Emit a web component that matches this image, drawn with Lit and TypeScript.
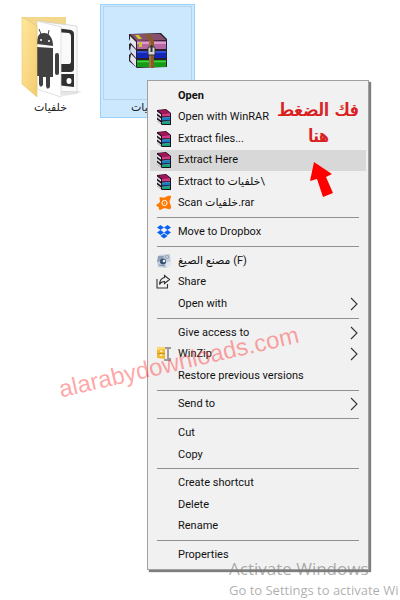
import { LitElement, html, svg, css, nothing } from "lit";
import { customElement, property } from "lit/decorators.js";

type Item = { label: string; icon?: string; bold?: boolean; active?: boolean; sub?: boolean };

const GROUPS: Item[][] = [
  [
    { label: "Open", bold: true },
    { label: "Open with WinRAR", icon: "rar" },
    { label: "Extract files...", icon: "rar" },
    { label: "Extract Here", icon: "rar", active: true },
    { label: "Extract to خلفيات\\", icon: "rar" },
    { label: "Scan خلفيات.rar", icon: "avast" },
  ],
  [{ label: "Move to Dropbox", icon: "dropbox" }],
  [
    { label: "مصنع الصيغ (F)", icon: "factory" },
    { label: "Share", icon: "share" },
    { label: "Open with", sub: true },
  ],
  [
    { label: "Give access to", sub: true },
    { label: "WinZip", icon: "zip", sub: true },
    { label: "Restore previous versions" },
  ],
  [{ label: "Send to", sub: true }],
  [{ label: "Cut" }, { label: "Copy" }],
  [{ label: "Create shortcut" }, { label: "Delete" }, { label: "Rename" }],
  [{ label: "Properties" }],
];

const ICONS: Record<string, unknown> = {
  rar: svg`
    <path d="M1 1 10 0 15 4V16H6L1 12Z" fill="#1d1220"/>
    <path d="M2 1.500 9.500.500 14 4 6 5Z" fill="#a01458"/><path d="M6 5 14 4V7L6 7.500Z" fill="#d23a86"/>
    <path d="M1 2.500 5 5.500V7.500L1 4.500Z" fill="#eee"/>
    <path d="M6 9 14 8V11L6 11.500Z" fill="#1a78c8"/><path d="M1 6.500 5 9.500V11.500L1 8.500Z" fill="#ddd"/>
    <path d="M6 13 14 12V15H6Z" fill="#17a673"/><path d="M1 10.500 5 13.500V15L1 12Z" fill="#eee"/>
    <path d="M6 9 14 8M6 13 14 12" stroke="#5cc0e0" stroke-width=".6"/>`,
  avast: svg`
    <path d="M3.500 2.500C5 1.500 7 3 9 2.500C11 1 13 .5 15 1C15 3 14 5 13.500 6C13.500 8 14.500 9 15 11C15.500 13.500 14 15 12 14C9.500 12.500 7 13 4.500 15C2.500 15 2.500 13.500 3 12C2 11.500 0 11.500.5 10C1 8.500 3.500 8.500 4 6.500Z" fill="#ff7800"/>
    <circle cx="8.500" cy="8" r="2.600" fill="none" stroke="#fff" stroke-width="1"/>
    <circle cx="8.500" cy="8" r=".6" fill="#fff"/>`,
  dropbox: svg`<path d="M4.500 1 8 3.500 4.500 6 1 3.500ZM11.500 1 15 3.500 11.500 6 8 3.500ZM4.500 6 8 8.500 4.500 11 1 8.500ZM11.500 6 15 8.500 11.500 11 8 8.500ZM8 9.500 11.500 12 8 14.500 4.500 12Z" fill="#0a62f5"/>`,
  factory: svg`
    <path d="M3 2 14 1 15 12 10 15 2 14 1 9Z" fill="#c5cfda"/>
    <path d="M2 3 8 3 6 8 1 9Z" fill="#8da0b8"/>
    <circle cx="7" cy="8.500" r="3" fill="#34506f"/><circle cx="8" cy="8" r="1.300" fill="#e8f2ff"/>
    <circle cx="11" cy="4" r="2" fill="#91a4bb"/><circle cx="11" cy="4" r=".8" fill="#fff"/>
    <path d="M10 10 15 8V13L10 14Z" fill="#e2e8ef"/><path d="M3 12 9 13" stroke="#7590b0"/>`,
  share: svg`<path d="M1 5V14H11.500V10M8.500 1.500 13.500 5.500 8.500 9.500V7.500C6 7.500 4.500 8.500 3.500 10.500C3.800 6.500 5.500 4 8.500 3.500Z" fill="none" stroke="#333" stroke-width="1.100"/>`,
  zip: svg`
    <path d="M8 1H15V3H13V12H15V15H8V13H11V3H8Z" fill="#9a9c9e"/>
    <path d="M1 1.500 9 1V13L1 12Z" fill="#f3bb35"/><path d="M1 1.500 9 1V3L1 4Z" fill="#ffdc6b"/>
    <path d="M4 4.500H6.500V6H4ZM4 8.500H6.500V10H4Z" fill="#fff3c4"/><path d="M1 7.500H9" stroke="#c99420"/>`,
};

@customElement("context-menu")
export class ContextMenu extends LitElement {
  @property({ attribute: false }) groups: Item[][] = [];

  static styles = css`
    :host { display: block; }
    .menu {
      box-sizing: border-box;
      display: flex;
      flex-direction: column;
      min-height: 490px;
      padding: 4px 2px 3px;
      background: #f1f1f1;
      border: 1px solid #a0a0a0;
      box-shadow: 2px 2px 1px 0 rgba(0, 0, 0, 0.5);
    }
    .item {
      flex: 3 1 0;
      display: grid;
      grid-template-columns: 16px 1fr 8px;
      align-items: center;
      column-gap: 6px;
      padding: 0 8px 0 6px;
      border: 0;
      background: none;
      color: #111;
      font: 11px/16px Roboto, "DejaVu Sans", sans-serif;
      text-align: left;
      white-space: nowrap;
    }
    .item.active { background: #d8d8d8; }
    .item.bold { font-weight: 700; }
    .item svg { display: block; }
    .label { grid-column: 2; }
    .icon, .chev { grid-row: 1; }
    .icon { grid-column: 1; }
    .chev { grid-column: 3; }
    .sep {
      flex: 1 1 0;
      display: flex;
      align-items: center;
      margin: 0 7px;
    }
    .sep::before { content: ""; flex: 1; height: 1px; background: #919191; }
  `;

  private row(i: Item) {
    return html`<button role="menuitem" class="item ${i.bold ? "bold" : ""} ${i.active ? "active" : ""}">
      ${i.icon ? html`<svg class="icon" width="16" height="16" viewBox="0 0 16 16" aria-hidden="true">${ICONS[i.icon]}</svg>` : nothing}
      <span class="label">${i.label}</span>
      ${i.sub ? html`<svg class="chev" width="8" height="14" viewBox="0 0 8 14" aria-hidden="true"><path d="M1 1 7 7 1 13" fill="none" stroke="#333" stroke-width="1.100"/></svg>` : nothing}
    </button>`;
  }

  render() {
    return html`<div class="menu" role="menu">
      ${this.groups.map((g, n) => html`${n ? html`<div class="sep" role="separator"></div>` : nothing}${g.map((i) => this.row(i))}`)}
    </div>`;
  }
}

@customElement("app-root")
export class AppRoot extends LitElement {
  static styles = css`
    :host {
      display: block;
      position: relative;
      min-height: 100vh;
      overflow: hidden;
      background: #fff;
    }
    .files { display: flex; gap: 2px; padding: 4px 3px 0; }
    .file {
      box-sizing: border-box;
      width: 95px;
      height: 114px;
      display: flex;
      flex-direction: column;
      align-items: center;
      padding: 1px 2px;
      border: 1px solid transparent;
      color: #222;
      font: 11px/16px "DejaVu Sans", sans-serif;
    }
    .file.selected { background: #cce8ff; border-color: #99d1ff; }
    .thumb {
      box-sizing: border-box;
      flex: none;
      align-self: stretch;
      height: 94px;
      display: grid;
      place-items: end center;
      border: 1px solid transparent;
    }
    .selected .thumb { padding-bottom: 4px; border-color: #b5d3ea; align-items: center; }
    .menu { position: absolute; left: 147px; top: 80px; width: 222px; }
    .note {
      position: absolute;
      left: 278px;
      top: 97px;
      width: 80px;
      margin: 0;
      color: #d9201f;
      font: 18px/26px "DejaVu Sans", sans-serif;
      text-shadow: 1px 0 #d9201f;
      text-align: center;
      white-space: nowrap;
    }
    .arrow { position: absolute; left: 309px; top: 161px; }
    .site {
      position: absolute;
      left: 56px;
      top: 348px;
      color: rgba(255, 40, 40, 0.42);
      font: 24px/28px "Liberation Sans", sans-serif;
      transform: rotate(-13deg);
    }
    .activate {
      position: absolute;
      left: 229px;
      top: 558px;
      color: rgba(120, 120, 120, 0.6);
      font: 13px/20px "Open Sans", sans-serif;
      white-space: nowrap;
    }
    .activate p { margin: 0; }
    .activate .big { font-size: 17px; line-height: 22px; }
  `;

  render() {
    return html`
      <main class="files">
        <div class="file">
          <div class="thumb">
            <svg width="64" height="84" viewBox="0 0 64 84" aria-hidden="true">
              <defs>
                <linearGradient id="fold" x2="1" y2="1"><stop stop-color="#ffe79c"/><stop offset="1" stop-color="#f4cc70"/></linearGradient>
              </defs>
              <path d="M40 77 63 76 58 79 44 81Z" fill="#e6e6e6"/>
              <path d="M3 2H47V65L20 70Z" fill="#f2d78c"/>
              <path d="M18 6 58 11V77L36 76Z" fill="#fafafa" stroke="#ccc" stroke-width=".7"/>
              <path d="M37 13 52 15Q55 16 55 19V54Q55 57 51 57H37V49H50Q52 49 52 46V21Q52 19 50 18L37 17Z" fill="#303030"/>
              <path d="M37 59H55V72L37 70Z" fill="#303030"/><ellipse cx="50" cy="66" rx="2.500" ry="3" fill="#fff"/>
              <path d="M18 6 42 12V82L18 74Z" fill="#fff" stroke="#d5d5d5" stroke-width=".7"/>
              <path d="M18 29C18 21 20 18 25 18C31 18 34 24 34 31L18 29ZM18 32 34 33V62H31V72Q28 76 27 71V62H24V70Q21 74 20 69V61H18Z" fill="#414141"/>
              <path d="M20 14 22 19M30 15 29 20" stroke="#414141"/><path d="M38 40V58" stroke="#414141" stroke-width="4" stroke-linecap="round"/>
              <circle cx="22" cy="25" r="1" fill="#fff"/><circle cx="30" cy="26" r="1" fill="#fff"/>
              <path d="M3 2 18 11V82L3 69Z" fill="url(#fold)" stroke="#e8c670" stroke-width=".6"/>
            </svg>
          </div>
          <span>خلفيات</span>
        </div>
        <div class="file selected">
          <div class="thumb">
            <svg width="40" height="36" viewBox="0 0 40 36" aria-hidden="true">
              <path d="M1 1 33 0 39 6V34L9 35 1 28V22L3 20 1 16V11L3 10 1 6Z" fill="#26202a"/>
              <path d="M2 1 32 1 38 7 9 8Z" fill="#86506f"/><path d="M9 8H38V16H9Z" fill="#b767a2"/><path d="M9 10H38" stroke="#dc9bcc" stroke-width="2"/>
              <path d="M2 3 8 9V16L2 9Z" fill="#e5e5ef"/>
              <path d="M9 18H38V25H9Z" fill="#1426b5"/><path d="M9 19H38" stroke="#3e5bec" stroke-width="1.500"/><path d="M3 12 8 17V25L2 18Z" fill="#d5dcef"/>
              <path d="M9 27H38V34H9Z" fill="#169b16"/><path d="M9 28.500H38" stroke="#45d83e" stroke-width="1.500"/><path d="M3 21 8 26V34L2 27Z" fill="#e5e5ef"/>
              <path d="M7 2 11 2 14 6 10 6ZM11 9H14V14H11Z" fill="#c8c829"/>
              <path d="M17 1H22L26 8V35H21V8Z" fill="#8a5a2c"/><path d="M22 8V35" stroke="#c28a4c"/>
              <rect x="20" y="14" width="7" height="8" rx="1" fill="#d6d6d6" stroke="#333"/><path d="M23.500 12V19" stroke="#333" stroke-width="2"/>
            </svg>
          </div>
          <span>خلفيات</span>
        </div>
      </main>
      <context-menu class="menu" .groups=${GROUPS}></context-menu>
      <p class="note" dir="rtl">فك الضغط<br />هنا</p>
      <svg class="arrow" width="26" height="36" viewBox="0 0 26 36" aria-hidden="true"><path d="M5 1 23 13 17 16 24 32 14 36 8 18 1 20Z" fill="#fe0000"/></svg>
      <div class="site">alarabydownloads.com</div>
      <div class="activate"><p class="big">Activate Windows</p><p>Go to Settings to activate Wi</p></div>
    `;
  }
}
